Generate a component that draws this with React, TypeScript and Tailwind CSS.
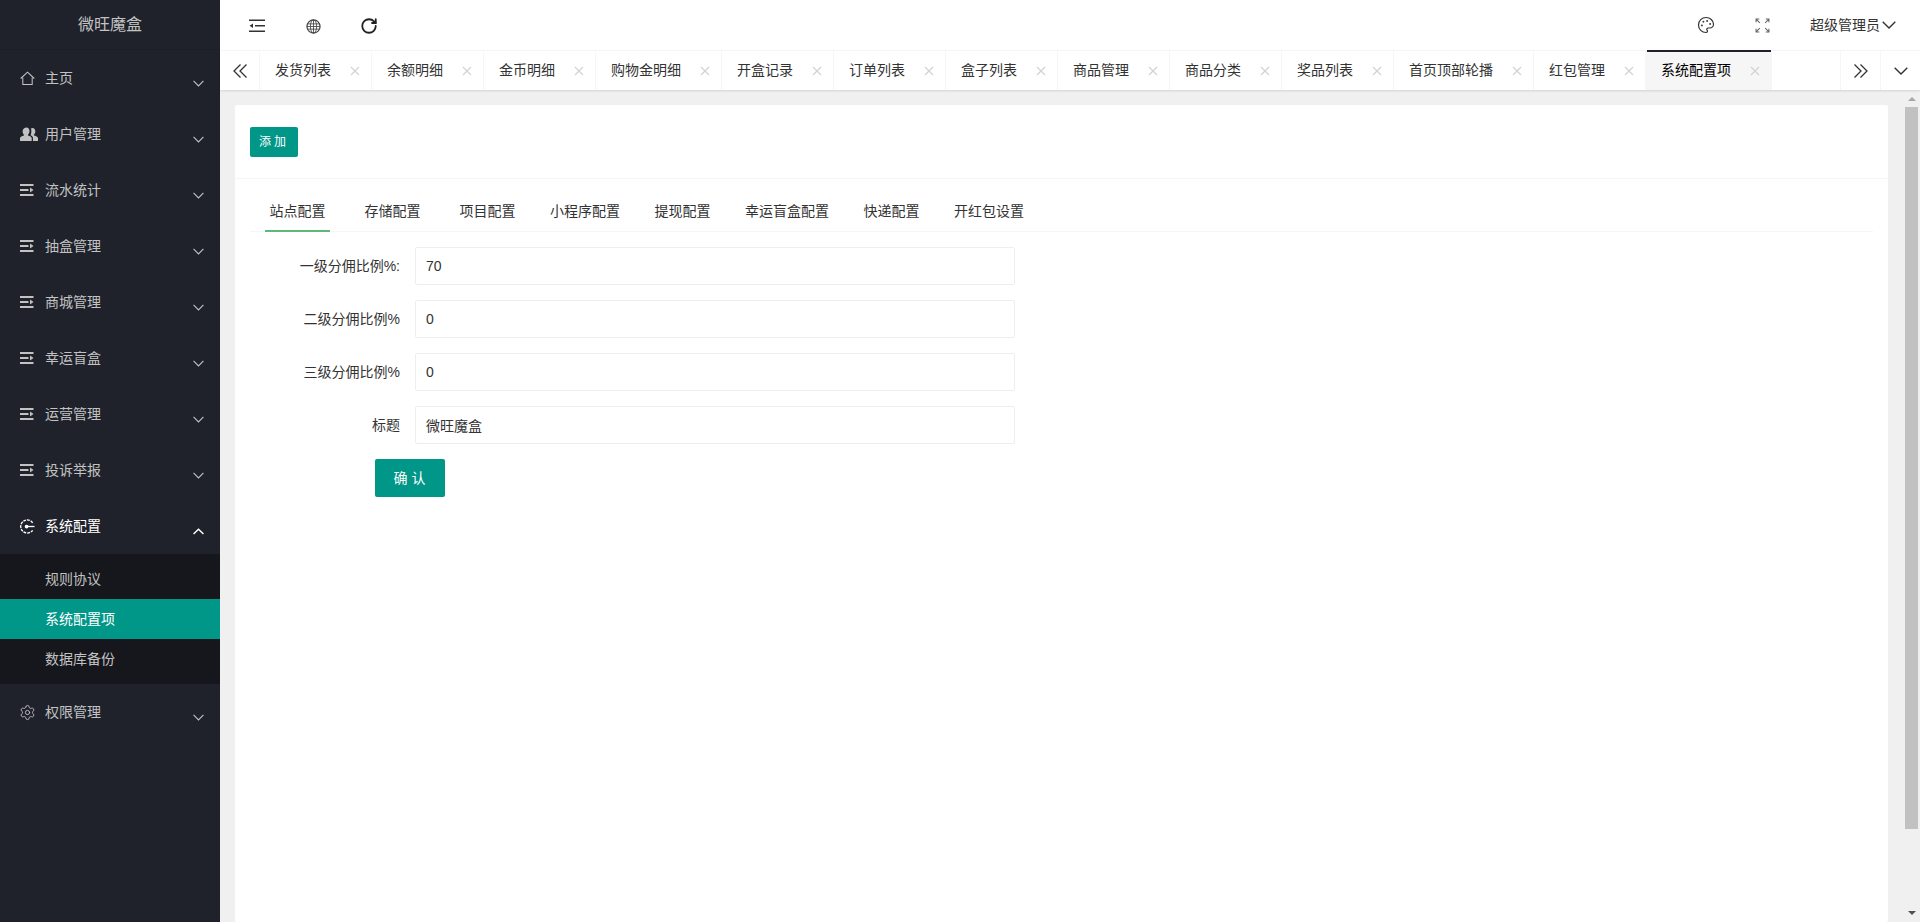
import { Palette, RotateCw, Settings } from "lucide-react";

type IconProps = { className?: string };

const HomeIcon = ({ className }: IconProps) => (
  <svg viewBox="0 0 16 16" fill="none" stroke="currentColor" strokeWidth="1.100" className={className}>
    <path d="M.7 8 8 1.300 15.300 8" />
    <path d="M3 6.800v7.700h10V6.800" />
  </svg>
);

const UsersIcon = ({ className }: IconProps) => (
  <svg viewBox="0 0 18 14" fill="currentColor" className={className}>
    <path d="M6.500.500c1.800 0 3 1.500 3 3.600 0 1.500-.6 2.900-1.500 3.500v1c1.800.4 3.700 1.300 3.700 2.700V14H0v-2.700c0-1.400 2.200-2.300 3.900-2.700v-1C3 7 2.600 5.600 2.600 4.100 2.600 2 4.700.5 6.500.5Z" />
    <path d="M12.500 1c1.700 0 2.800 1.400 2.800 3.200 0 1.400-.5 2.600-1.400 3.200v1c1.600.3 4.100 1.200 4.100 2.600V14h-5v-2.700c0-1.400-.9-2.300-2.400-3 .5-1.100.8-2.600.8-4.200 0-1.300-.2-2.200-.6-2.400.5-.4 1-.7 1.700-.7Z" />
  </svg>
);

const ListIcon = ({ className }: IconProps) => (
  <svg viewBox="0 0 14 12" fill="currentColor" className={className}>
    <rect x="0" y="0" width="13.500" height="2" />
    <rect x="0" y="5" width="8.500" height="2" />
    <rect x="0" y="10" width="13.500" height="2" />
    <path d="M10 3.500 13.500 6 10 8.500Z" />
  </svg>
);

const ConfigIcon = ({ className }: IconProps) => (
  <svg viewBox="0 0 16 16" fill="none" stroke="currentColor" strokeWidth="1.400" className={className}>
    <path d="M13.500 4A7 7 0 1 0 13.500 12" strokeDasharray="3 1" />
    <path d="M6 8h9.500" />
    <circle cx="7" cy="8" r="1.300" fill="currentColor" />
  </svg>
);

const GearIcon = ({ className }: IconProps) => <Settings strokeWidth={1.3} className={className} />;

const OutdentIcon = ({ className }: IconProps) => (
  <svg viewBox="0 0 16 14" fill="currentColor" className={className}>
    <rect x="0" y="0.500" width="16" height="1.500" />
    <rect x="6" y="6" width="10" height="1.500" />
    <rect x="0" y="11.500" width="16" height="1.500" />
    <path d="M4 4.500 0.500 6.750 4 9Z" />
  </svg>
);

const GlobeIcon = ({ className }: IconProps) => (
  <svg viewBox="0 0 16 16" fill="none" stroke="currentColor" strokeWidth="0.900" className={className}>
    <circle cx="8" cy="8" r="7" strokeWidth="1.300" />
    <ellipse cx="8" cy="8" rx="3.300" ry="7" />
    <path d="M8 1v14M1.500 5.200h13M1 8h14M1.500 10.800h13" />
  </svg>
);

const FullscreenIcon = ({ className }: IconProps) => (
  <svg viewBox="0 0 14 14" fill="none" stroke="currentColor" strokeWidth="1" className={className}>
    <path d="M1 4V1h3M1 1l3.500 3.500M10 1h3v3M13 1 9.500 4.500M1 10v3h3M1 13l3.500-3.500M13 10v3h-3M13 13l-3.500-3.500" />
  </svg>
);

const ChevronDown = ({ className }: IconProps) => (
  <svg viewBox="0 0 14 8" fill="none" stroke="currentColor" strokeWidth="1.400" className={className}>
    <path d="M.7.700 7 7 13.300.700" />
  </svg>
);

const ChevronUp = ({ className }: IconProps) => (
  <svg viewBox="0 0 14 8" fill="none" stroke="currentColor" strokeWidth="1.800" className={className}>
    <path d="M.7 7.300 7 1l6.300 6.300" />
  </svg>
);

const DoubleLeft = ({ className }: IconProps) => (
  <svg viewBox="0 0 14 14" fill="none" stroke="currentColor" strokeWidth="1.300" className={className}>
    <path d="M7.500.500 1 7l6.500 6.500M13.500.500 7 7l6.500 6.500" />
  </svg>
);

const DoubleRight = ({ className }: IconProps) => (
  <svg viewBox="0 0 14 14" fill="none" stroke="currentColor" strokeWidth="1.300" className={className}>
    <path d="M.5.500 7 7 .5 13.500M6.500.500 13 7l-6.500 6.500" />
  </svg>
);

const CloseIcon = () => (
  <svg viewBox="0 0 10 10" fill="none" stroke="#d2d2d2" strokeWidth="1.200" className="w-[10px] h-[10px] shrink-0">
    <path d="M1 1l8 8M9 1 1 9" />
  </svg>
);

const menus = [
  { name: "主页", icon: HomeIcon, size: "w-[15px] h-[15px]" },
  { name: "用户管理", icon: UsersIcon, size: "w-[18px] h-[14px]" },
  { name: "流水统计", icon: ListIcon, size: "w-[14px] h-[12px]" },
  { name: "抽盒管理", icon: ListIcon, size: "w-[14px] h-[12px]" },
  { name: "商城管理", icon: ListIcon, size: "w-[14px] h-[12px]" },
  { name: "幸运盲盒", icon: ListIcon, size: "w-[14px] h-[12px]" },
  { name: "运营管理", icon: ListIcon, size: "w-[14px] h-[12px]" },
  { name: "投诉举报", icon: ListIcon, size: "w-[14px] h-[12px]" },
];

const pageTabs = [
  "发货列表",
  "余额明细",
  "金币明细",
  "购物金明细",
  "开盒记录",
  "订单列表",
  "盒子列表",
  "商品管理",
  "商品分类",
  "奖品列表",
  "首页顶部轮播",
  "红包管理",
];

const configTabs = ["站点配置", "存储配置", "项目配置", "小程序配置", "提现配置", "幸运盲盒配置", "快递配置", "开红包设置"];

const fields = [
  { label: "一级分佣比例%:", value: "70" },
  { label: "二级分佣比例%", value: "0" },
  { label: "三级分佣比例%", value: "0" },
  { label: "标题", value: "微旺魔盒" },
];

function MenuRow({ name, icon: Icon, size, open }: { name: string; icon: (p: IconProps) => React.ReactNode; size: string; open?: boolean }) {
  return (
    <div className={`flex items-center h-[56px] pl-[20px] pr-[16px] text-[14px] ${open ? "text-white" : "text-[#c2c2c2]"}`}>
      <span className="w-[25px] flex items-center">
        <Icon className={size} />
      </span>
      <span className="flex-1">{name}</span>
      {open ? <ChevronUp className="w-[11px] h-[7px] mt-[10px]" /> : <ChevronDown className="w-[11px] h-[7px] mt-[10px] text-[#c2c2c2]" />}
    </div>
  );
}

function Sidebar() {
  return (
    <aside className="w-[220px] shrink-0 bg-[#1f222b]">
      <div className="h-[50px] flex items-center justify-center text-[16px] text-[#c2c2c2] border-b border-[#1b1e26]">微旺魔盒</div>
      {menus.map((m) => (
        <MenuRow key={m.name} name={m.name} icon={m.icon} size={m.size} />
      ))}
      <MenuRow name="系统配置" icon={ConfigIcon} size="w-[15px] h-[15px]" open />
      <div className="bg-[#16171c] py-[5px] text-[14px] text-[#c2c2c2]">
        <div className="h-[40px] leading-[40px] pl-[45px]">规则协议</div>
        <div className="h-[40px] leading-[40px] pl-[45px] bg-[#009688] text-white">系统配置项</div>
        <div className="h-[40px] leading-[40px] pl-[45px]">数据库备份</div>
      </div>
      <MenuRow name="权限管理" icon={GearIcon} size="w-[17px] h-[17px] -ml-px" />
    </aside>
  );
}

function Header() {
  return (
    <header className="h-[50px] shrink-0 bg-white flex items-center text-[#333]">
      <div className="flex items-center pl-[9px] pt-[2px]">
        <span className="w-[56px] flex justify-center"><OutdentIcon className="w-[16px] h-[14px]" /></span>
        <span className="w-[56px] flex justify-center"><GlobeIcon className="w-[15px] h-[15px] text-[#444]" /></span>
        <span className="w-[56px] flex justify-center"><RotateCw strokeWidth={2.4} className="w-[18px] h-[18px] text-[#222]" /></span>
      </div>
      <div className="ml-auto flex items-center pr-[24px]">
        <span className="w-[56px] flex justify-center"><Palette strokeWidth={1.6} className="w-[18px] h-[18px] text-[#333]" /></span>
        <span className="w-[56px] flex justify-center"><FullscreenIcon className="w-[15px] h-[15px] text-[#666]" /></span>
        <span className="ml-[20px] text-[14px] text-[#333]">超级管理员</span>
        <ChevronDown className="ml-[2px] w-[14px] h-[8px]" />
      </div>
    </header>
  );
}

function TabBar() {
  return (
    <div className="h-[40px] shrink-0 bg-white flex border-t border-[#f6f6f6] shadow-[0_1px_2px_rgba(0,0,0,0.12)] text-[14px] text-[#333] relative z-10">
      <div className="w-[40px] shrink-0 flex items-center justify-center border-r border-[#f6f6f6]">
        <DoubleLeft className="w-[14px] h-[14px]" />
      </div>
      {pageTabs.map((t) => (
        <div key={t} className="flex items-center pl-[15px] pr-[11px] border-r border-[#f6f6f6]">
          <span>{t}</span>
          <span className="ml-[19px]"><CloseIcon /></span>
        </div>
      ))}
      <div className="relative flex items-center pl-[15px] pr-[12px] bg-[#f6f6f6] text-[#000]">
        <span className="absolute left-[1px] right-[1px] top-[-1px] h-[2px] bg-[#1f222b]" />
        <span>系统配置项</span>
        <span className="ml-[19px]"><CloseIcon /></span>
      </div>
      <div className="ml-auto flex">
        <div className="w-[40px] flex items-center justify-center border-l border-[#f6f6f6]">
          <DoubleRight className="w-[14px] h-[14px]" />
        </div>
        <div className="w-[40px] flex items-center justify-center border-l border-[#f6f6f6]">
          <ChevronDown className="w-[14px] h-[8px]" />
        </div>
      </div>
    </div>
  );
}

function ConfigCard() {
  return (
    <div className="flex-1 bg-white rounded-[2px] mt-[15px] ml-[15px] mr-[15px] text-[14px] text-[#333]">
      <div className="h-[74px] border-b border-[#f6f6f6] pl-[15px] pt-[22px]">
        <button className="h-[30px] w-[48px] bg-[#009688] text-white text-[12px] tracking-[3px] rounded-[2px] flex items-center justify-center">
          添加
        </button>
      </div>
      <div className="mx-[15px] mt-[12px] h-[41px] flex border-b border-[#f6f6f6]">
        {configTabs.map((t, i) => (
          <div key={t} className="relative box-content min-w-[65px] px-[15px] h-[40px] leading-[40px] text-center whitespace-nowrap">
            {t}
            {i === 0 && <span className="absolute left-[15px] right-[15px] bottom-[-1px] h-[2px] bg-[#5fb878]" />}
          </div>
        ))}
      </div>
      <form className="pt-[15px]">
        {fields.map((f) => (
          <div key={f.label} className="flex items-center h-[38px] mb-[15px]">
            <label className="w-[165px] text-right shrink-0">{f.label}</label>
            <input
              readOnly
              value={f.value}
              className="ml-[15px] w-[600px] h-[38px] border border-[#eeeeee] rounded-[2px] pl-[10px] outline-none text-[#333]"
            />
          </div>
        ))}
        <div className="pl-[140px]">
          <button type="button" className="w-[70px] h-[38px] bg-[#009688] text-white rounded-[2px] tracking-[4px] pl-[3px]">
            确认
          </button>
        </div>
      </form>
    </div>
  );
}

function ScrollBar() {
  return (
    <div className="w-[17px] shrink-0 flex flex-col items-center relative">
      <span className="mt-[7px] w-0 h-0 border-x-[4px] border-x-transparent border-b-[4px] border-b-[#a8a8a8]" />
      <div className="mt-[6px] w-[13px] h-[722px] bg-[#c1c1c1]" />
      <span className="mt-auto mb-[7px] w-0 h-0 border-x-[4px] border-x-transparent border-t-[4px] border-t-[#505050]" />
    </div>
  );
}

export default function App() {
  return (
    <div className="h-screen w-full flex overflow-hidden font-['Liberation_Sans','Noto_Sans_CJK_SC',sans-serif]">
      <Sidebar />
      <div className="flex-1 min-w-0 flex flex-col">
        <Header />
        <TabBar />
        <main className="flex-1 min-h-0 flex bg-[#f0f0f0]">
          <ConfigCard />
          <ScrollBar />
        </main>
      </div>
    </div>
  );
}
